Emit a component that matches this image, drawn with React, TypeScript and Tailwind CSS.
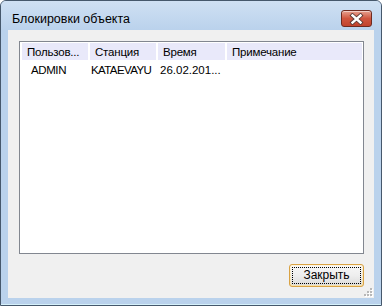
import React from "react";

const font = { fontFamily: '"Liberation Sans", Arial, sans-serif' };

function CloseButton() {
  return (
    <div className="w-[31px] h-[17px] rounded-[3px] border border-[#6e2a20] bg-gradient-to-b from-[#e6a08f] via-[#cf553f] to-[#c2432d] flex items-center justify-center shadow-[inset_0_1px_0_rgba(255,255,255,0.5)]">
      <svg width="15" height="12" viewBox="0 0 15 12">
        <path d="M3.5 2.5 L11.5 9.5 M11.5 2.5 L3.5 9.5" stroke="#5a3a36" strokeWidth="4.2" strokeLinecap="square" />
        <path d="M3.5 2.5 L11.5 9.5 M11.5 2.5 L3.5 9.5" stroke="#ffffff" strokeWidth="2.4" strokeLinecap="square" />
      </svg>
    </div>
  );
}

function Grip() {
  const dots: [number, number][] = [
    [6, 0],
    [3, 3],
    [6, 3],
    [0, 6],
    [3, 6],
    [6, 6],
  ];
  return (
    <svg width="9" height="9" viewBox="0 0 9 9">
      {dots.map(([x, y], i) => (
        <g key={i}>
          <rect x={x + 1} y={y + 1} width="2" height="2" fill="#ffffff" />
          <rect x={x} y={y} width="2" height="2" fill="#b8b8b8" />
        </g>
      ))}
    </svg>
  );
}

export default function App() {
  const cols = [
    { title: "Пользов...", w: "w-[66px]" },
    { title: "Станция", w: "w-[66px]" },
    { title: "Время", w: "w-[67px]" },
    { title: "Примечание", w: "flex-1" },
  ];
  return (
    <div
      className="w-[382px] h-[306px] bg-[#bad2ec] border border-[#46586c] rounded-t-[6px] flex flex-col text-[12px] text-black overflow-hidden"
      style={font}
    >
      <div className="h-[29px] flex items-start justify-between bg-gradient-to-b from-[#cfe0f3] to-[#bad2ec]">
        <div className="pl-[11px] pt-[10px] leading-[16px] text-[12.5px]">Блокировки объекта</div>
        <div className="pt-[9px] pr-[9px]">
          <CloseButton />
        </div>
      </div>
      <div className="mx-[7px] h-[268px] bg-[#f0f0f0] pt-[11px] pl-[11px] pr-[10px] flex flex-col relative">
        <div className="h-[213px] border border-[#828790] bg-white pt-[1px] pl-[2px] pr-[1px] text-[11.5px]">
          <div className="h-[17px] flex gap-[2px]">
            {cols.map((c, i) => (
              <div
                key={i}
                className={`${c.w} h-[17px] bg-[#e9e9fa] pl-[5px] pt-[1px] leading-[17px] whitespace-nowrap overflow-hidden tracking-[-0.2px]`}
              >
                {c.title}
              </div>
            ))}
          </div>
          <div className="h-[21px] flex leading-[21px] whitespace-nowrap">
            <div className="w-[68px] pl-[9px] tracking-[-0.4px]">ADMIN</div>
            <div className="w-[68px] pl-[1px] tracking-[-0.6px]">KATAEVAYU</div>
            <div className="w-[68px] pl-[2px]">26.02.201...</div>
          </div>
        </div>
        <div className="mt-[10px] flex justify-end">
          <div className="w-[75px] h-[23px] rounded-[3px] border border-[#d9a243] p-[1px] bg-gradient-to-b from-[#fdf4e0] to-[#f6dfa8]">
            <div className="w-full h-full rounded-[2px] bg-gradient-to-b from-[#f7f7f7] via-[#eeeeee] to-[#dcdcdc] p-[1px]">
              <div className="w-full h-full border border-dotted border-black flex items-center justify-center leading-[15px]">
                Закрыть
              </div>
            </div>
          </div>
        </div>
        <div className="absolute right-[1px] bottom-[1px]">
          <Grip />
        </div>
      </div>
      <div className="flex-1 border-b border-[#d6f1fb]" />
    </div>
  );
}
